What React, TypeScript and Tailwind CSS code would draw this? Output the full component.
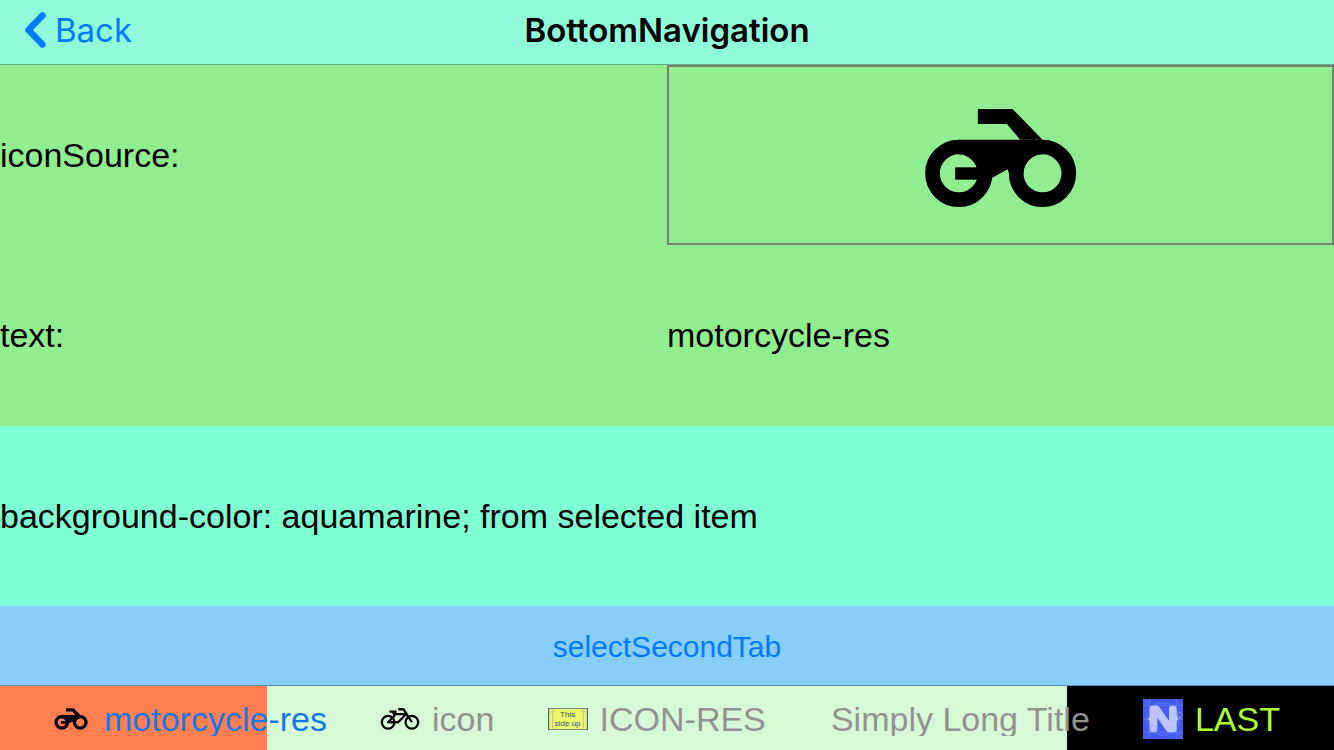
import React from "react";

function MotorcycleIcon({ className }: { className: string }) {
  return (
    <svg viewBox="72 54 458 300" className={className} aria-hidden="true">
      <g fill="none" stroke="#000" strokeWidth="44">
        <circle cx="176" cy="250" r="79" />
        <circle cx="427" cy="250" r="79" />
      </g>
      <path d="M233 57H337L427 149H360L320 102H233Z" />
      <path d="M175 149H427V193A57 57 0 0 0 370 250H327L322 238L277 263L232 250A57 57 0 0 0 175 193Z" />
      <path d="M165 232H240V269H165Z" />
    </svg>
  );
}

function BicycleIcon({ className }: { className: string }) {
  return (
    <svg viewBox="118 112 123 72" className={className} aria-hidden="true">
      <g fill="none" stroke="#000" strokeWidth="7" strokeLinejoin="round">
        <circle cx="143" cy="158" r="19.5" />
        <circle cx="216" cy="158" r="19.5" />
        <path d="M147 125H169M174 118H188Q193 118 194 124L216 158M196 133H160M164 136L143 158H174L197 134M157 126L164 136" />
      </g>
    </svg>
  );
}

function SignIcon({ className }: { className: string }) {
  return (
    <svg viewBox="0 0 120 66" className={className} aria-hidden="true">
      <rect x="1.5" y="1.5" width="117" height="63" fill="#e9f76c" stroke="#77867a" strokeWidth="3" />
      <path d="M2 0V66M118 0V66" stroke="#45577c" strokeWidth="3" />
      <path d="M14 61V9M7 13L14 7L21 13M106 61V9M99 13L106 7L113 13" fill="none" stroke="#bdc58b" strokeWidth="3" />
      <g fill="#35517c" fontFamily="Liberation Sans, sans-serif" fontSize="24" textAnchor="middle">
        <text x="59" y="26">This</text>
        <text x="59" y="54">side up</text>
      </g>
    </svg>
  );
}

function NativeIcon({ className }: { className: string }) {
  return (
    <svg viewBox="0 0 120 120" className={className} aria-hidden="true">
      <rect width="120" height="120" fill="#425cf0" />
      <g fill="none" stroke="#6a82f3" strokeWidth="2">
        <circle cx="60" cy="60" r="49" />
        <path d="M0 19H120M0 100H120M19 0V120M100 0V120M0 0L120 120M0 60H120" />
      </g>
      <path
        d="M20 29Q20 20 29 20H42Q47 20 50 25L78 66V29Q78 20 87 20H92Q101 20 101 29V48Q101 57 107 60Q101 63 101 72V91Q101 100 92 100H78Q73 100 70 95L43 56V91Q43 100 34 100H29Q20 100 20 91V72Q20 63 14 60Q20 57 20 48Z"
        fill="#bac6fd"
      />
      <g fill="none" stroke="#93a5f8" strokeWidth="2">
        <circle cx="31" cy="88" r="9" />
        <circle cx="110" cy="48" r="8" />
      </g>
    </svg>
  );
}

const tabs = [
  { text: "motorcycle-res", color: "text-[#1878e8]", item: "gap-4", icon: <MotorcycleIcon className="h-[22px] w-[34px]" /> },
  { text: "icon", color: "text-[#929292]", item: "gap-3", icon: <BicycleIcon className="h-6 w-10" /> },
  { text: "ICON-RES", color: "text-[#929292]", item: "gap-3", icon: <SignIcon className="h-[22px] w-10" /> },
  { text: "Simply Long Title", color: "text-[#929292]", item: "pl-3", icon: null },
  { text: "LAST", color: "text-[#adff2f]", item: "gap-3", icon: <NativeIcon className="size-10" /> },
];

export default function App() {
  return (
    <div className="flex min-h-screen flex-col bg-[#7fffd4] font-['Liberation_Sans',sans-serif] text-[34px] leading-10 text-black">
      <header className="grid h-[65px] grid-cols-[1fr_auto_1fr] items-center border-b border-[#64a882] bg-[#8ffbd8] pb-1 font-['Inter',sans-serif] text-[33px]">
        <button type="button" className="flex items-center gap-2 justify-self-start pl-6 text-[#007aff]">
          <svg viewBox="0 0 23 36" className="h-9 w-[23px]" fill="none" stroke="currentColor" strokeWidth="6.5" strokeLinecap="round" strokeLinejoin="round" aria-hidden="true">
            <path d="M18.5 3.5L4.5 18L18.5 32.5" />
          </svg>
          Back
        </button>
        <h1 className="font-semibold">BottomNavigation</h1>
      </header>
      <main className="flex flex-1 flex-col">
        <div className="grid flex-1 grid-rows-3">
          <dl className="row-span-2 grid grid-cols-2 grid-rows-2 bg-[#90ee90]">
            <dt className="flex items-center">iconSource:</dt>
            <dd className="flex items-center justify-center border-2 border-[#778277] pt-1.5">
              <MotorcycleIcon className="h-[100px] w-[153px]" />
            </dd>
            <dt className="flex items-center">text:</dt>
            <dd className="flex items-center">motorcycle-res</dd>
          </dl>
          <p className="flex items-center">background-color: aquamarine; from selected item</p>
        </div>
        <button type="button" className="h-[79px] bg-[#87cefa] pt-0.5 text-[30px] text-[#007aff]">
          selectSecondTab
        </button>
      </main>
      <nav className="flex h-[65px] items-center justify-between border-t border-[#5790b5] bg-[linear-gradient(to_right,#ff7f50_20%,#d6fad6_20%_80%,#000_80%)] px-[54px] pt-0.5">
        {tabs.map((tab) => (
          <button key={tab.text} type="button" className={`flex items-center ${tab.item} ${tab.color}`}>
            {tab.icon}
            <span className="h-[34px] overflow-hidden leading-[34px] whitespace-nowrap">{tab.text}</span>
          </button>
        ))}
      </nav>
    </div>
  );
}
